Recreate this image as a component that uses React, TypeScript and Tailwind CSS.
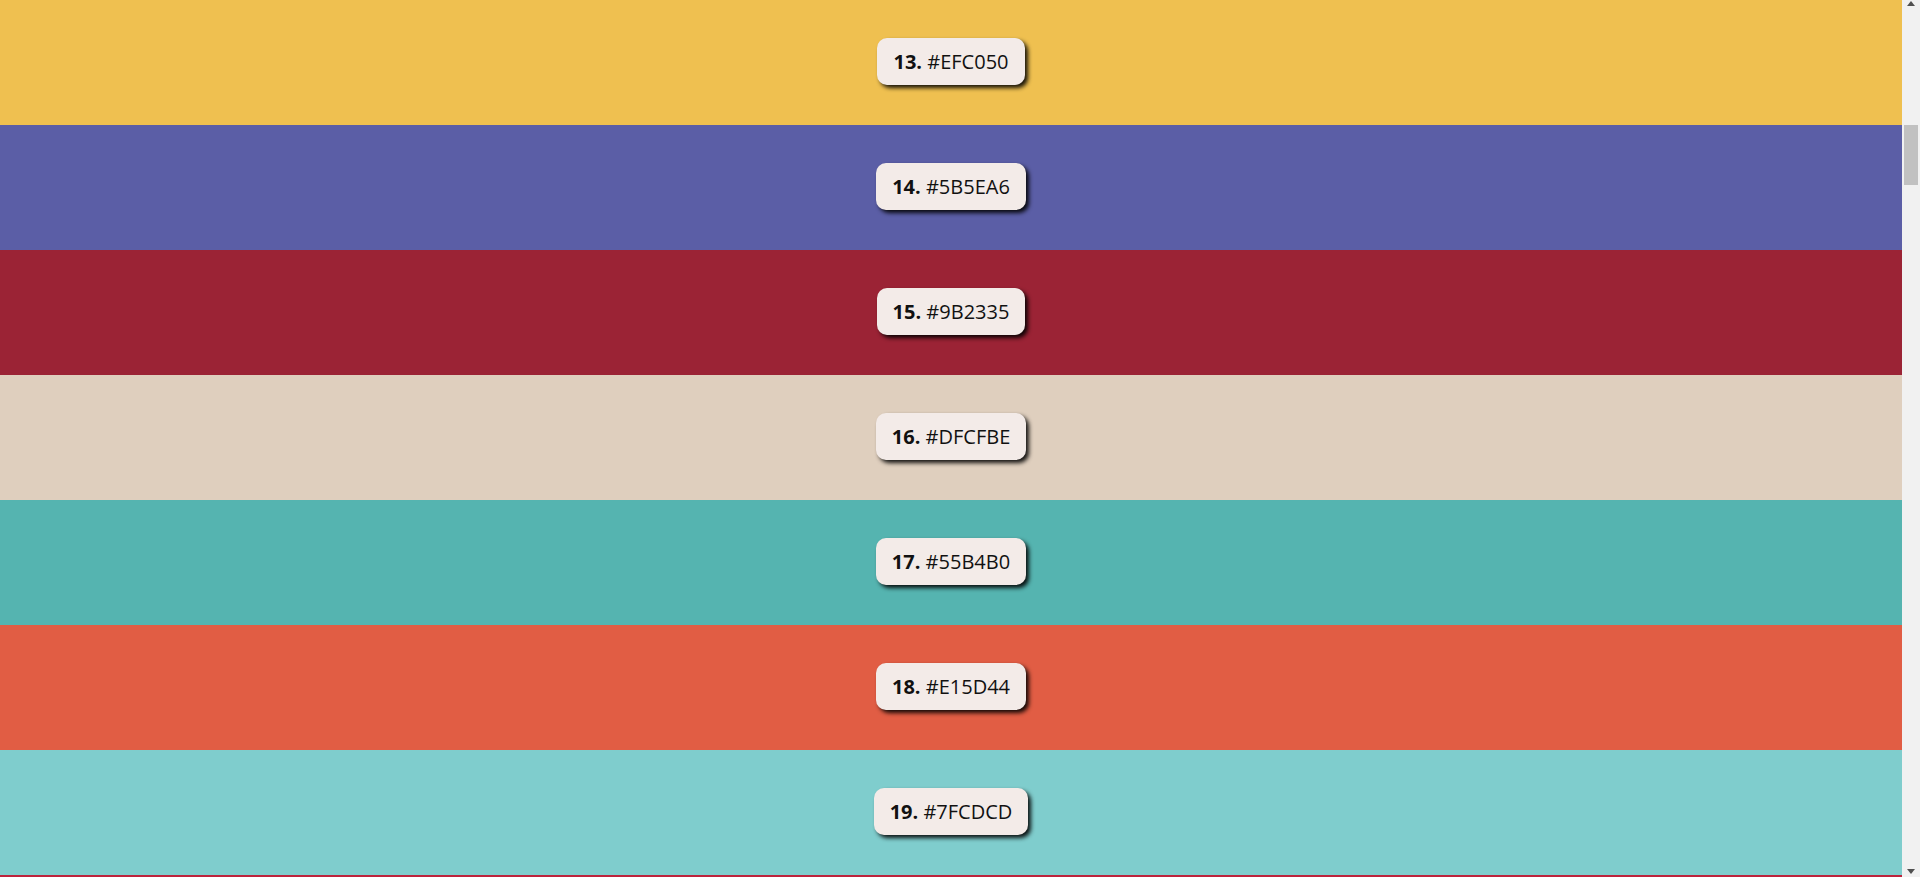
import React from "react";

const swatches = [
  { n: 13, hex: "EFC050" },
  { n: 14, hex: "5B5EA6" },
  { n: 15, hex: "9B2335" },
  { n: 16, hex: "DFCFBE" },
  { n: 17, hex: "55B4B0" },
  { n: 18, hex: "E15D44" },
  { n: 19, hex: "7FCDCD" },
];

const Swatch: React.FC<{ n: number; hex: string }> = ({ n, hex }) => (
  <div
    className="h-[125px] shrink-0 flex items-center justify-center"
    style={{ backgroundColor: `#${hex}` }}
  >
    <div className="bg-[#f3ebe8] rounded-[10px] px-[16px] py-[10px] shadow-[3px_3px_4px_rgba(0,0,0,0.9)] text-[20px] leading-[27px] text-[#111] font-['Open_Sans',sans-serif] -mt-[2px]">
      <span className="font-bold">{n}.</span> #{hex}
    </div>
  </div>
);

// static scrollbar as seen in the capture
const Scrollbar: React.FC = () => (
  <div className="w-[18px] shrink-0 bg-[#f1f1f1] flex flex-col items-center">
    <svg width="8" height="5" viewBox="0 0 8 5" className="mt-[1px]">
      <path d="M4 0 L8 5 L0 5 Z" fill="#505050" />
    </svg>
    <div className="mt-[119px] w-[14px] h-[60px] bg-[#c1c1c1]" />
    <div className="flex-1" />
    <svg width="8" height="5" viewBox="0 0 8 5" className="mb-[3px]">
      <path d="M0 0 L8 0 L4 5 Z" fill="#505050" />
    </svg>
  </div>
);

export default function App() {
  return (
    <div className="h-[877px] flex overflow-hidden font-['Open_Sans',sans-serif]">
      <div className="flex-1 flex flex-col">
        {swatches.map((s) => (
          <Swatch key={s.n} n={s.n} hex={s.hex} />
        ))}
        <div className="flex-1 bg-[#BC243C]" />
      </div>
      <Scrollbar />
    </div>
  );
}
